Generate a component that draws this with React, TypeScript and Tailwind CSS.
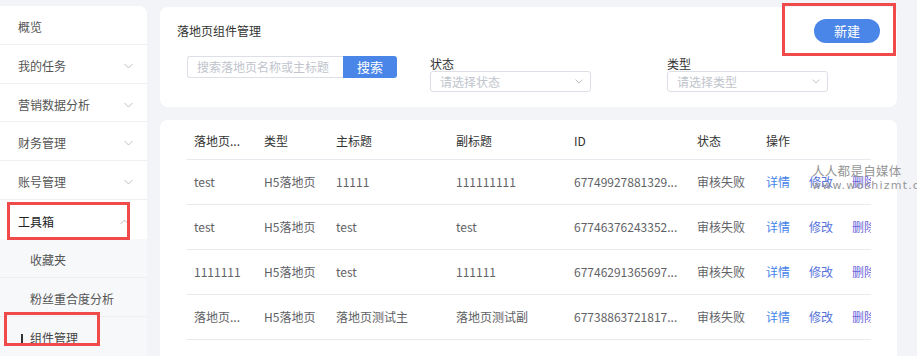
import React from "react";

const FONT = { fontFamily: '"Noto Sans CJK SC", "Noto Sans", sans-serif' };

function Chevron({ up = false }: { up?: boolean }) {
  return (
    <svg width="9" height="6" viewBox="0 0 9 6" className="shrink-0">
      {up ? (
        <polyline points="0.5,5 4.5,1 8.5,5" fill="none" stroke="#b4b8c0" strokeWidth="0.9" />
      ) : (
        <polyline points="0.5,1 4.5,5 8.5,1" fill="none" stroke="#b4b8c0" strokeWidth="0.9" />
      )}
    </svg>
  );
}

function SelectChevron() {
  return (
    <svg width="8" height="5" viewBox="0 0 8 5">
      <polyline points="0.5,0.5 4,4 7.5,0.5" fill="none" stroke="#b8bcc4" strokeWidth="0.9" />
    </svg>
  );
}

const menu = [
  { t: "概览", c: false },
  { t: "我的任务", c: true },
  { t: "营销数据分析", c: true },
  { t: "财务管理", c: true },
  { t: "账号管理", c: true },
];

const rows = [
  ["test", "H5落地页", "11111", "111111111", "67749927881329...", "审核失败"],
  ["test", "H5落地页", "test", "test", "67746376243352...", "审核失败"],
  ["1111111", "H5落地页", "test", "111111", "67746291365697...", "审核失败"],
  ["落地页...", "H5落地页", "落地页测试主", "落地页测试副", "67738863721817...", "审核失败"],
];

const widths = ["w-[70px]", "w-[72px]", "w-[120px]", "w-[118px]", "w-[123px]", "w-[69px]"];

function Actions() {
  return (
    <div className="flex gap-[19px] pl-[7px] whitespace-nowrap">
      <span className="text-[#4483ea]">详情</span>
      <span className="text-[#5672dc]">修改</span>
      <span className="text-[#6a63dc]">删除</span>
    </div>
  );
}

export default function App() {
  return (
    <div
      className="relative w-[917px] h-[356px] overflow-hidden bg-[#f3f4f8] flex text-[12px]"
      style={FONT}
    >
      {/* Sidebar */}
      <div className="w-[147px] mt-[6px] bg-white rounded-tr-lg flex flex-col shrink-0">
        {menu.map((m) => (
          <div
            key={m.t}
            className="h-[39px] border-b border-[#eef0f4] flex items-center justify-between pl-[18px] pr-[14px] pt-[4px] text-[#555]"
          >
            <span>{m.t}</span>
            {m.c && <Chevron />}
          </div>
        ))}
        <div className="h-[39px] flex items-center justify-between pl-[18px] pr-[18px] pt-[4px] text-[#222]">
          <span>工具箱</span>
          <Chevron up />
        </div>
        <div className="bg-[#f6f8fa] flex-1">
          <div className="h-[39px] border-b border-[#eceef2] flex items-center pl-[30px] pt-[4px] text-[#555]">
            收藏夹
          </div>
          <div className="h-[39px] border-b border-[#eceef2] flex items-center pl-[30px] pt-[4px] text-[#555]">
            粉丝重合度分析
          </div>
          <div className="h-[39px] flex items-center pl-[21px] pt-[4px] text-[#444]">
            <span className="w-[2px] h-[10px] bg-[#333] mr-[7px] mt-[2px]" />
            <span>组件管理</span>
          </div>
        </div>
      </div>

      {/* Main */}
      <div className="ml-[13px] pt-[7px] w-[737px] flex flex-col gap-[13px] shrink-0">
        {/* Filter card */}
        <div className="h-[100px] bg-white rounded-lg shrink-0 flex flex-col">
          <div className="flex items-center justify-between pt-[12px] pl-[17px] pr-[17px] h-[36px]">
            <span className="text-[#333] text-[12px]">落地页组件管理</span>
            <div className="w-[66px] h-[24px] rounded-full bg-[#4a86e8] text-white text-[13px] flex items-center justify-center">
              新建
            </div>
          </div>
          <div className="flex items-start mt-[13px] pl-[27px]">
            <div className="flex h-[22px]">
              <div className="w-[156px] h-[22px] border border-[#dcdfe6] border-r-0 rounded-l-[3px] flex items-center pl-[9px] text-[#c0c4cc]">
                搜索落地页名称或主标题
              </div>
              <div className="w-[54px] h-[22px] bg-[#4a86e8] rounded-r-[3px] text-white text-[13px] flex items-center justify-center">
                搜索
              </div>
            </div>
            <div className="ml-[33px] w-[161px] flex flex-col">
              <span className="leading-[15px] text-[#333]">状态</span>
              <div className="h-[21px] border border-[#dcdfe6] rounded-[3px] flex items-center justify-between pl-[9px] pr-[7px] text-[#c0c4cc]">
                <span>请选择状态</span>
                <SelectChevron />
              </div>
            </div>
            <div className="ml-[76px] w-[161px] flex flex-col">
              <span className="leading-[15px] text-[#333]">类型</span>
              <div className="h-[21px] border border-[#dcdfe6] rounded-[3px] flex items-center justify-between pl-[9px] pr-[7px] text-[#c0c4cc]">
                <span>请选择类型</span>
                <SelectChevron />
              </div>
            </div>
          </div>
        </div>

        {/* Table card */}
        <div className="flex-1 bg-white rounded-t-lg pl-[27px] pr-[26px] pt-[2px]">
          <div className="w-[684px] overflow-hidden">
            <div className="h-[38px] border-b border-[#e8eaf0] flex items-center text-[#333] whitespace-nowrap">
              {["落地页...", "类型", "主标题", "副标题", "ID", "状态"].map((h, i) => (
                <div key={i} className={`${widths[i]} pl-[7px] shrink-0`}>
                  {h}
                </div>
              ))}
              <div className="pl-[7px]">操作</div>
            </div>
            {rows.map((r, ri) => (
              <div
                key={ri}
                className="h-[45px] border-b border-[#e8eaf0] flex items-center text-[#5f6266] whitespace-nowrap"
              >
                {r.map((c, i) => (
                  <div key={i} className={`${widths[i]} pl-[7px] shrink-0`}>
                    {c}
                  </div>
                ))}
                <Actions />
              </div>
            ))}
            <div className="h-[45px] flex items-center whitespace-nowrap">
              <div className="w-[572px] shrink-0" />
              <Actions />
            </div>
          </div>
        </div>
      </div>

      {/* Watermark */}
      <div className="absolute left-[812px] top-[163px] pointer-events-none flex flex-col text-[#8c8c8c] opacity-90">
        <span className="text-[12.5px] leading-[15px] tracking-[0.3px]">人人都是自媒体</span>
        <span
          className="text-[11px] leading-[13px] tracking-[1.2px] mt-[1px]"
          style={{ fontFamily: '"DejaVu Sans", sans-serif' }}
        >
          www.woshizmt.cn
        </span>
      </div>

      {/* Red annotation boxes */}
      <div className="absolute left-[7px] top-[202px] w-[123px] h-[38px] border-[3px] border-[#f04a4a] pointer-events-none" />
      <div className="absolute left-[4px] top-[312px] w-[96px] h-[34px] border-[3px] border-[#f04a4a] pointer-events-none" />
      <div className="absolute left-[782px] top-[3px] w-[114px] h-[53px] border-[3px] border-[#f04a4a] pointer-events-none" />
    </div>
  );
}
